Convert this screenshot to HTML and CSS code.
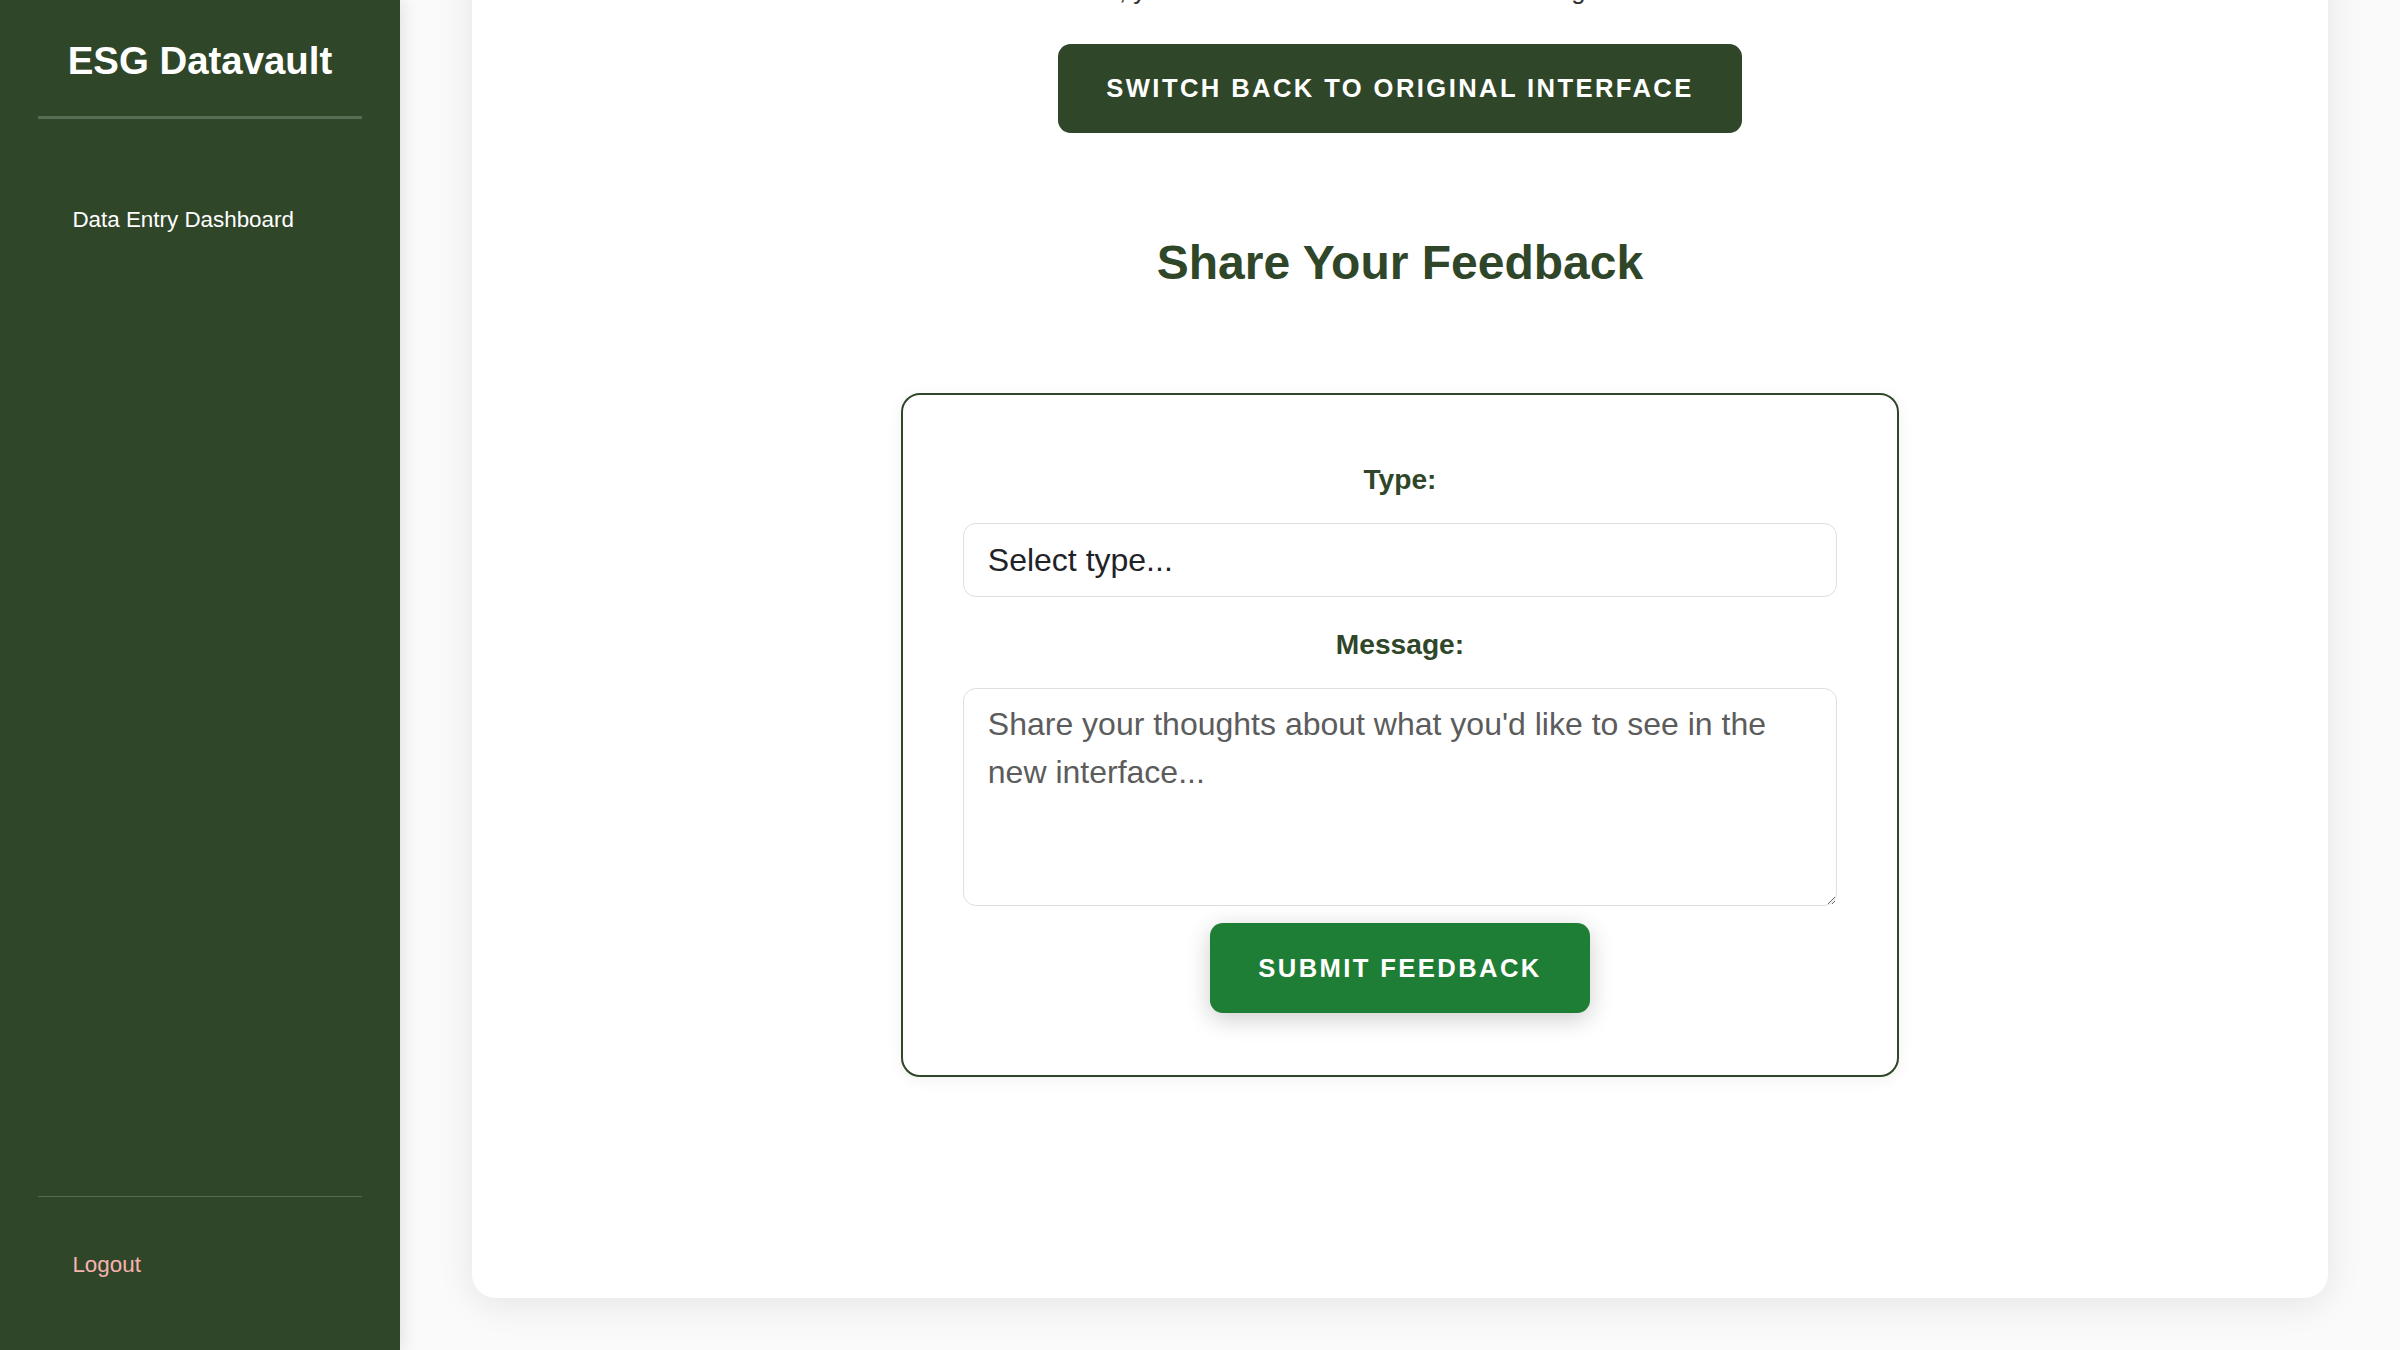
FILE: index.html
```html
<!DOCTYPE html>
<html lang="en">
<head>
<meta charset="utf-8">
<title>ESG Datavault – Feedback</title>
<link rel="stylesheet" href="styles.css">
</head>
<body>
<div class="layout">
  <aside class="sidebar">
    <div class="sidebar-header">
      <h1 class="brand">ESG Datavault</h1>
    </div>
    <nav class="nav">
      <a class="nav-link" href="#">Data Entry Dashboard</a>
    </nav>
    <div class="sidebar-footer">
      <a class="logout-link" href="#">Logout</a>
    </div>
  </aside>

  <main class="main">
    <section class="card">
      <h1 class="card-title">Welcome to the New Interface</h1>
      <p class="intro">We're rebuilding the ESG Datavault experience and would love your input.<br>In the meantime, you can switch back to the classic design and send us feedback.</p>
      <button class="switch-btn" type="button">Switch Back to Original Interface</button>

      <h2 class="feedback-title">Share Your Feedback</h2>

      <form class="feedback-form">
        <label class="field-label" for="type">Type:</label>
        <select class="field-select" id="type">
          <option>Select type...</option>
          <option>Feature request</option>
          <option>Bug report</option>
          <option>General</option>
        </select>
        <label class="field-label" for="message">Message:</label>
        <textarea class="field-textarea" id="message" placeholder="Share your thoughts about what you'd like to see in the new interface..."></textarea>
        <button class="submit-btn" type="submit">Submit Feedback</button>
      </form>
    </section>
  </main>
</div>
</body>
</html>
```

FILE: styles.css
```css
* {
  box-sizing: border-box;
}

html, body {
  margin: 0;
  padding: 0;
  height: 100%;
}

body {
  font-family: "Liberation Sans", Arial, Helvetica, sans-serif;
  background: #fafafa;
  color: #333;
}

.layout {
  display: flex;
  height: 100vh;
  overflow: hidden;
}

/* ---------- Sidebar ---------- */
.sidebar {
  width: 400px;
  flex: 0 0 400px;
  height: 100vh;
  background: #2f4629;
  display: flex;
  flex-direction: column;
  padding: 39px 38.4px 38.4px;
  box-shadow: 3px 0 16px rgba(0, 0, 0, 0.1);
  position: relative;
  z-index: 2;
}

.sidebar-header {
  padding-bottom: 32.6px;
  border-bottom: 3.2px solid rgba(255, 255, 255, 0.2);
}

.brand {
  margin: 0;
  font-size: 38.4px;
  line-height: 44px;
  font-weight: 700;
  color: #ffffff;
  text-align: center;
}

.nav {
  flex: 1;
  margin-top: 64px;
}

.nav-link {
  display: block;
  padding: 24.5px 0 24.5px 34px;
  font-size: 22.4px;
  line-height: 25.7px;
  color: #ffffff;
  text-decoration: none;
}

.sidebar-footer {
  border-top: 1.6px solid rgba(255, 255, 255, 0.2);
}

.logout-link {
  display: block;
  padding: 54.5px 0 34px 34px;
  font-size: 22.4px;
  line-height: 25.7px;
  color: #f8b3b0;
  text-decoration: none;
}

/* ---------- Main ---------- */
.main {
  flex: 1;
  height: 100vh;
  overflow: hidden;
  display: flex;
  flex-direction: column;
  justify-content: flex-end;
  padding: 0 72px 52px;
}

.card {
  flex: 0 0 auto;
  background: #ffffff;
  border-radius: 24px;
  box-shadow: 0 6px 36px rgba(0, 0, 0, 0.09);
  padding: 51.2px 51.2px 221px;
  display: flex;
  flex-direction: column;
  align-items: center;
  text-align: center;
}

.card-title {
  margin: 0 0 25.6px;
  font-size: 48px;
  line-height: 55px;
  color: #2f4629;
}

.intro {
  margin: 0 0 33px;
  font-size: 25.6px;
  line-height: 41px;
  color: #333333;
}

.switch-btn {
  height: 89px;
  padding: 0 48px;
  border: none;
  border-radius: 12.8px;
  background: #2f4629;
  color: #ffffff;
  font-family: inherit;
  font-size: 25.6px;
  font-weight: 700;
  letter-spacing: 2.4px;
  text-transform: uppercase;
  line-height: 89px;
  cursor: pointer;
}

.feedback-title {
  margin: 102.6px 0 102.4px;
  font-size: 48px;
  line-height: 55px;
  font-weight: 700;
  color: #2f4629;
}

/* ---------- Form ---------- */
.feedback-form {
  width: 998.4px;
  display: flex;
  flex-direction: column;
  padding: 70px 60px 62.5px;
  border: 2px solid #2f4629;
  border-radius: 19.2px;
  background: #ffffff;
  box-shadow: 0 3px 16px rgba(0, 0, 0, 0.06);
}

.field-label {
  display: block;
  font-size: 28.16px;
  line-height: 29.4px;
  font-weight: 700;
  color: #2f4629;
  margin-bottom: 28.6px;
  text-align: center;
}

.field-select,
.field-textarea {
  width: 100%;
  font-family: inherit;
  font-size: 32px;
  border: 1.6px solid #dcdfe4;
  border-radius: 12.8px;
  background: #ffffff;
  color: #1f2226;
  outline: none;
}

.field-select {
  height: 74px;
  padding: 0 24px;
  margin-bottom: 33px;
  -webkit-appearance: none;
  appearance: none;
}

.field-textarea {
  height: 218px;
  padding: 11.8px 24px;
  line-height: 48px;
}

.field-textarea::placeholder {
  color: #5c5c5c;
}

.submit-btn {
  align-self: center;
  margin-top: 17px;
  height: 90px;
  padding: 0 48px;
  border: none;
  border-radius: 12.8px;
  background: #1f7e35;
  color: #ffffff;
  font-family: inherit;
  font-size: 25.6px;
  font-weight: 700;
  letter-spacing: 2.4px;
  text-transform: uppercase;
  line-height: 90px;
  box-shadow: 0 6px 24px rgba(0, 0, 0, 0.2);
  cursor: pointer;
}
```
